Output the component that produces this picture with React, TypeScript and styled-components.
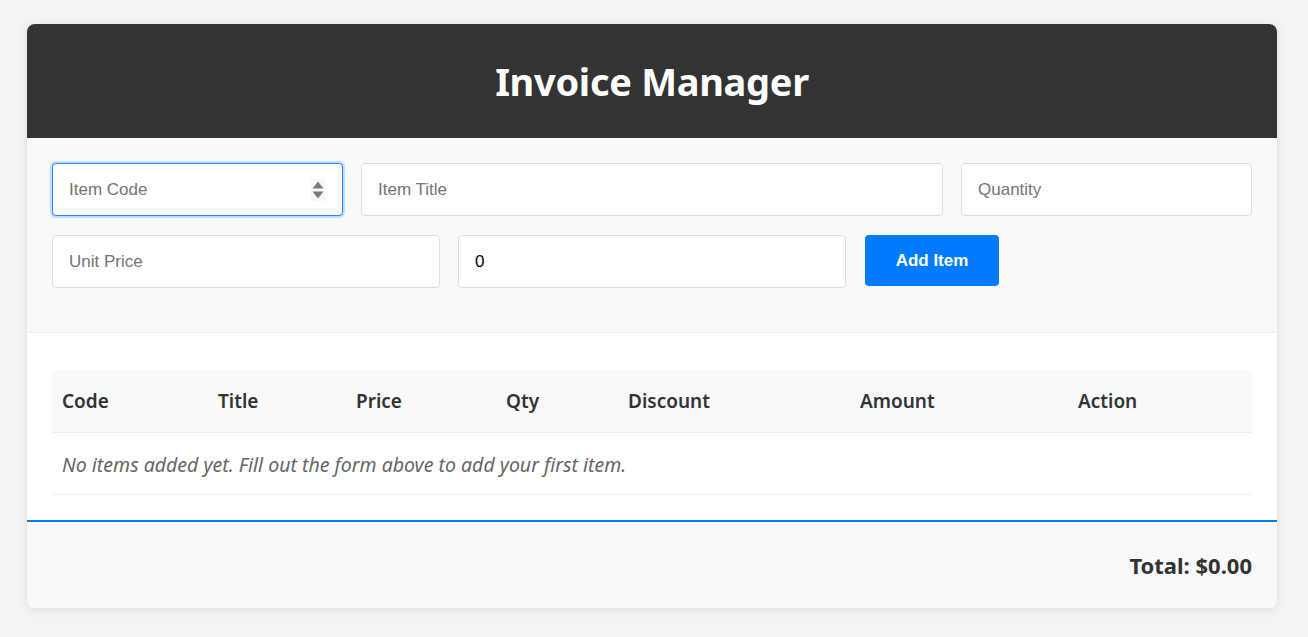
import React from "react";
import styled, { createGlobalStyle } from "styled-components";

const GlobalStyle = createGlobalStyle`
  html, body { margin: 0; padding: 0; }
  body {
    background: #f4f4f4;
    font-family: "Noto Sans", "Open Sans", sans-serif;
    color: #333;
  }
  * { box-sizing: border-box; }
`;

const Page = styled.div`
  padding: 24px 31px 29px 27px;
`;

const Card = styled.div`
  background: #ffffff;
  border-radius: 8px;
  box-shadow: 0 2px 10px rgba(0, 0, 0, 0.1);
  overflow: hidden;
`;

const Header = styled.header`
  background: #333333;
  height: 114px;
  display: flex;
  align-items: center;
  justify-content: center;
`;

const Title = styled.h1`
  margin: 0;
  color: #ffffff;
  font-size: 38px;
  font-weight: 700;
  letter-spacing: -0.3px;
`;

const FormSection = styled.section`
  background: #f9f9f9;
  padding: 25px 25px 25px;
  border-bottom: 1px solid #eeeeee;
`;

const FormRow = styled.div<{ $cols: string }>`
  display: grid;
  grid-template-columns: ${(p) => p.$cols};
  gap: 18px;
  margin-bottom: 19px;
  align-items: start;
`;

const Field = styled.input`
  height: 53px;
  width: 100%;
  padding: 0 16px;
  border: 1px solid #dddddd;
  border-radius: 4px;
  background: #ffffff;
  font-family: "Liberation Sans", Arial, sans-serif;
  font-size: 17px;
  color: #000;
  outline: none;
  &::placeholder { color: #757575; }
`;

const SelectBox = styled.div`
  height: 53px;
  padding: 0 16px;
  border: 1px solid #2684ff;
  border-radius: 4px;
  background: #ffffff;
  box-shadow: 0 0 0 2px rgba(38, 132, 255, 0.25);
  display: flex;
  align-items: center;
  justify-content: space-between;
  font-family: "Liberation Sans", Arial, sans-serif;
  font-size: 17px;
  color: #757575;
`;

const Arrows = styled.svg`
  width: 14px;
  height: 22px;
  margin-right: 1px;
`;

const AddButton = styled.button`
  justify-self: start;
  margin-left: 1px;
  width: 134px;
  height: 51px;
  padding: 0;
  border: none;
  border-radius: 4px;
  background: #007bff;
  color: #ffffff;
  font-family: "Liberation Sans", Arial, sans-serif;
  font-size: 17px;
  font-weight: 700;
  cursor: pointer;
`;

const TableSection = styled.section`
  padding: 37px 25px 25px;
`;

const Table = styled.table`
  width: 100%;
  border-collapse: collapse;
  table-layout: fixed;
`;

const Th = styled.th`
  height: 62px;
  padding: 1px 10px 0;
  background: #f8f9fa;
  border-bottom: 1px solid #eeeeee;
  text-align: left;
  font-size: 19px;
  font-weight: 600;
  color: #333;
`;

const EmptyCell = styled.td`
  height: 62px;
  padding: 3px 10px 0;
  border-bottom: 1px solid #eeeeee;
  font-size: 19.5px;
  font-style: italic;
  color: #666666;
`;

const Footer = styled.footer`
  border-top: 2px solid #007bff;
  background: #f8f9fa;
  height: 88px;
  padding: 1px 25px 0;
  display: flex;
  align-items: center;
  justify-content: flex-end;
`;

const Total = styled.div`
  font-size: 22px;
  font-weight: 700;
  color: #333;
`;

const columns = [
  { label: "Code", width: 156 },
  { label: "Title", width: 138 },
  { label: "Price", width: 150 },
  { label: "Qty", width: 122 },
  { label: "Discount", width: 232 },
  { label: "Amount", width: 218 },
  { label: "Action", width: 184 },
];

export default function App() {
  return (
    <>
      <GlobalStyle />
      <Page>
        <Card>
          <Header>
            <Title>Invoice Manager</Title>
          </Header>
          <FormSection>
            <FormRow $cols="1fr 2fr 1fr">
              <SelectBox>
                <span>Item Code</span>
                <Arrows viewBox="0 0 14 22">
                  <rect x="0" y="0" width="14" height="22" fill="#f7f7f7" />
                  <path d="M7 2.5 L12.5 9.5 H1.5 Z" fill="#7a7a7a" />
                  <path d="M7 19.5 L12.5 12.5 H1.5 Z" fill="#7a7a7a" />
                </Arrows>
              </SelectBox>
              <Field placeholder="Item Title" />
              <Field placeholder="Quantity" />
            </FormRow>
            <FormRow $cols="1fr 1fr 1fr">
              <Field placeholder="Unit Price" />
              <Field defaultValue="0" />
              <AddButton>Add Item</AddButton>
            </FormRow>
          </FormSection>
          <TableSection>
            <Table>
              <colgroup>
                {columns.map((c) => (
                  <col key={c.label} style={{ width: c.width }} />
                ))}
              </colgroup>
              <thead>
                <tr>
                  {columns.map((c) => (
                    <Th key={c.label}>{c.label}</Th>
                  ))}
                </tr>
              </thead>
              <tbody>
                <tr>
                  <EmptyCell colSpan={7}>
                    No items added yet. Fill out the form above to add your first item.
                  </EmptyCell>
                </tr>
              </tbody>
            </Table>
          </TableSection>
          <Footer>
            <Total>Total: $0.00</Total>
          </Footer>
        </Card>
      </Page>
    </>
  );
}
